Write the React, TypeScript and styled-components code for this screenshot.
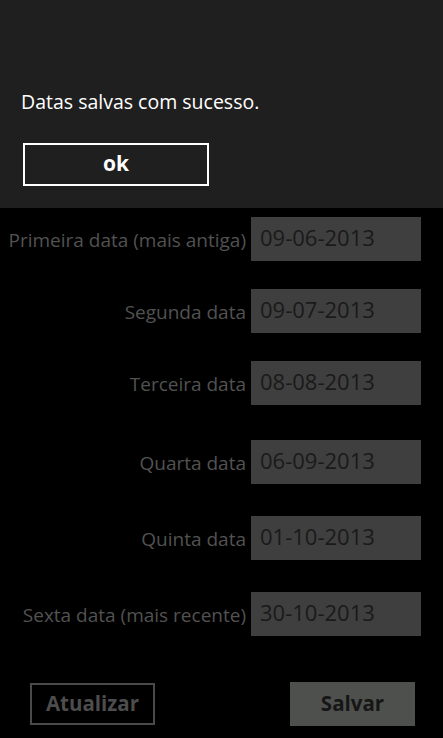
import React from 'react';
import styled, { createGlobalStyle } from 'styled-components';

const GlobalStyle = createGlobalStyle`
  html, body {
    margin: 0;
    padding: 0;
    background: #000;
  }
  body {
    font-family: 'Open Sans', 'Noto Sans', sans-serif;
  }
`;

const Screen = styled.div`
  width: 443px;
  height: 738px;
  background: #000;
  overflow: hidden;
  display: flex;
  flex-direction: column;
`;

const Dialog = styled.div`
  height: 208px;
  background: #1f1f1f;
  box-sizing: border-box;
  padding: 88px 0 0 21px;
  display: flex;
  flex-direction: column;
`;

const Message = styled.div`
  color: #fff;
  font-size: 19.5px;
  line-height: 27px;
`;

const OkButton = styled.button`
  margin: 28px 0 0 2px;
  width: 186px;
  height: 43px;
  box-sizing: border-box;
  border: 2px solid #fff;
  background: transparent;
  color: #fff;
  font-family: inherit;
  font-weight: 700;
  font-size: 21px;
  padding: 0 0 3px;
`;

const Form = styled.div`
  display: flex;
  flex-direction: column;
  padding-top: 9px;
`;

const Row = styled.div<{ $gap: number }>`
  display: flex;
  align-items: center;
  justify-content: flex-end;
  margin-top: ${(p) => p.$gap}px;
  padding-right: 22px;
`;

const Label = styled.span`
  color: #525252;
  font-size: 19px;
  margin-right: 5px;
  padding-top: 2px;
  white-space: nowrap;
`;

const Field = styled.div`
  width: 170px;
  height: 44px;
  background: #3f3f3f;
  color: #1a1a1a;
  font-size: 22px;
  box-sizing: border-box;
  padding: 0 0 4px 9px;
  display: flex;
  align-items: center;
`;

const Actions = styled.div`
  display: flex;
  justify-content: space-between;
  align-items: center;
  padding: 0 28px 0 30px;
  margin-top: 46px;
`;

const Button = styled.button<{ $filled?: boolean }>`
  width: 125px;
  height: ${(p) => (p.$filled ? 44 : 42)}px;
  box-sizing: border-box;
  border: ${(p) => (p.$filled ? 'none' : '2px solid #4a4a4a')};
  background: ${(p) => (p.$filled ? '#4e504e' : 'transparent')};
  color: ${(p) => (p.$filled ? '#161616' : '#4d4d4d')};
  font-family: inherit;
  font-weight: 700;
  font-size: 20.5px;
  padding: 0 0 3px;
`;

const dates = [
  { label: 'Primeira data (mais antiga)', value: '09-06-2013', gap: 0 },
  { label: 'Segunda data', value: '09-07-2013', gap: 28 },
  { label: 'Terceira data', value: '08-08-2013', gap: 28 },
  { label: 'Quarta data', value: '06-09-2013', gap: 35 },
  { label: 'Quinta data', value: '01-10-2013', gap: 32 },
  { label: 'Sexta data (mais recente)', value: '30-10-2013', gap: 32 },
];

export default function App() {
  return (
    <Screen>
      <GlobalStyle />
      <Dialog>
        <Message>Datas salvas com sucesso.</Message>
        <OkButton>ok</OkButton>
      </Dialog>
      <Form>
        {dates.map((d) => (
          <Row key={d.label} $gap={d.gap}>
            <Label>{d.label}</Label>
            <Field>{d.value}</Field>
          </Row>
        ))}
      </Form>
      <Actions>
        <Button>Atualizar</Button>
        <Button $filled>Salvar</Button>
      </Actions>
    </Screen>
  );
}
